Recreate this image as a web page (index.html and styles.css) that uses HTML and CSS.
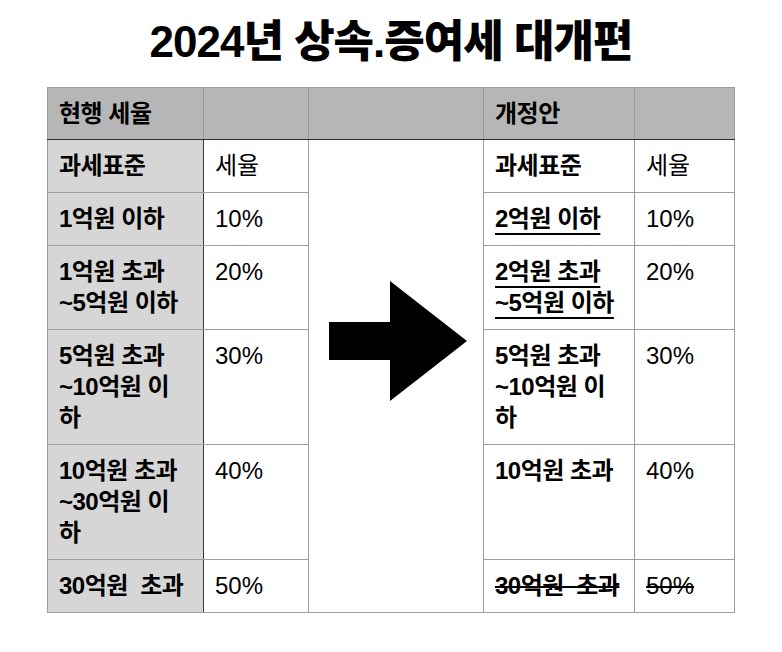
FILE: index.html
```html
<!DOCTYPE html>
<html lang="ko">
<head>
<meta charset="utf-8">
<link rel="stylesheet" href="styles.css">
</head>
<body>
<h1 class="title">2024년 상속.증여세 대개편</h1>
<table class="tax">
  <colgroup>
    <col class="c1"><col class="c2"><col class="c3"><col class="c4"><col class="c5">
  </colgroup>
  <thead>
    <tr class="head">
      <th>현행 세율</th><th></th><th></th><th>개정안</th><th></th>
    </tr>
  </thead>
  <tbody>
    <tr>
      <td class="cur">과세표준</td><td class="rate">세율</td>
      <td class="mid" rowspan="7">
        <svg class="arrow" width="138" height="120" viewBox="0 0 138 120"><polygon points="0,41 61,41 61,0 138,60 61,120 61,79 0,79" fill="#000"/></svg>
      </td>
      <td class="new">과세표준</td><td class="rate">세율</td>
    </tr>
    <tr>
      <td class="cur">1억원 이하</td><td class="rate">10%</td>
      <td class="new"><span class="ul">2억원 이하</span></td><td class="rate">10%</td>
    </tr>
    <tr>
      <td class="cur">1억원 초과<br>~5억원 이하</td><td class="rate">20%</td>
      <td class="new"><span class="ul">2억원 초과<br>~5억원 이하</span></td><td class="rate">20%</td>
    </tr>
    <tr>
      <td class="cur">5억원 초과<br>~10억원 이<br>하</td><td class="rate">30%</td>
      <td class="new">5억원 초과<br>~10억원 이<br>하</td><td class="rate">30%</td>
    </tr>
    <tr>
      <td class="cur">10억원 초과<br>~30억원 이<br>하</td><td class="rate">40%</td>
      <td class="new">10억원 초과</td><td class="rate">40%</td>
    </tr>
    <tr>
      <td class="cur">30억원&nbsp; 초과</td><td class="rate">50%</td>
      <td class="new"><span class="st">30억원&nbsp; 초과</span></td><td class="rate"><span class="st">50%</span></td>
    </tr>
  </tbody>
</table>
</body>
</html>
```

FILE: styles.css
```css
html, body {
  margin: 0;
  padding: 0;
  background: #fff;
}
body {
  font-family: "Liberation Sans", "Noto Sans CJK KR", sans-serif;
  color: #000;
}
.title {
  margin: 14px 0 0;
  height: 73px;
  font-size: 44px;
  line-height: 56px;
  font-weight: 900;
  text-align: center;
  letter-spacing: -1px;
}
.tax {
  border-collapse: collapse;
  table-layout: fixed;
  margin: 0 auto;
  width: 687px;
  font-size: 24px;
  line-height: 31px;
}
.c1 { width: 156px; }
.c2 { width: 105px; }
.c3 { width: 175px; }
.c4 { width: 151px; }
.c5 { width: 100px; }
.tax th, .tax td {
  border: 1px solid #9d9d9d;
  padding: 10px 10px 11px 11px;
  text-align: left;
  vertical-align: top;
  letter-spacing: -0.5px;
}
.tax .head th {
  background: #b5b6b5;
  font-weight: 700;
  height: 31px;
  padding-bottom: 10px;
  border-bottom: 1px solid #2c2c2c;
}
.tax .cur {
  background: #d6d6d6;
  font-weight: 700;
  border-right: 1px solid #3a3a3a;
}
.tax .new {
  font-weight: 700;
}
.tax .rate {
  font-weight: 400;
  letter-spacing: 0;
}
.tax .mid {
  padding: 0;
}
.arrow {
  display: block;
  margin: 141px 0 0 20px;
}
.ul {
  text-decoration: underline;
  text-decoration-thickness: 2px;
  text-underline-offset: 6px;
}
.st {
  text-decoration: line-through;
  text-decoration-thickness: 2px;
}
```
